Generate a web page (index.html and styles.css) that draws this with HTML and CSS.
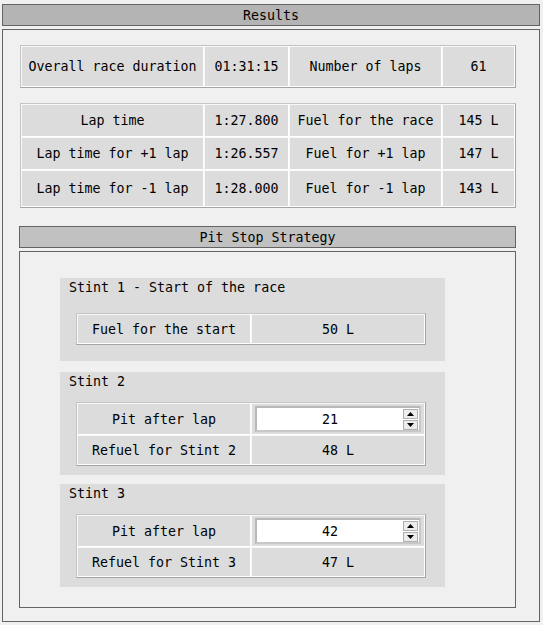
FILE: index.html
```html
<!DOCTYPE html>
<html>
<head>
<meta charset="utf-8">
<link rel="stylesheet" href="styles.css">
</head>
<body>
<div class="app">
  <div class="bar">Results</div>
  <div class="results">
    <div class="grid g1">
      <div class="cell">Overall race duration</div>
      <div class="cell">01:31:15</div>
      <div class="cell">Number of laps</div>
      <div class="cell">61</div>
    </div>
    <div class="grid g2">
      <div class="cell">Lap time</div>
      <div class="cell">1:27.800</div>
      <div class="cell">Fuel for the race</div>
      <div class="cell">145 L</div>
      <div class="cell">Lap time for +1 lap</div>
      <div class="cell">1:26.557</div>
      <div class="cell">Fuel for +1 lap</div>
      <div class="cell">147 L</div>
      <div class="cell">Lap time for -1 lap</div>
      <div class="cell">1:28.000</div>
      <div class="cell">Fuel for -1 lap</div>
      <div class="cell">143 L</div>
    </div>
    <div class="bar bar2">Pit Stop Strategy</div>
    <div class="pit">
      <div class="stint s1">
        <div class="stitle">Stint 1 - Start of the race</div>
        <div class="grid sg sg1">
          <div class="cell">Fuel for the start</div>
          <div class="cell">50 L</div>
        </div>
      </div>
      <div class="stint s2">
        <div class="stitle">Stint 2</div>
        <div class="grid sg sg2">
          <div class="cell">Pit after lap</div>
          <div class="cell">
            <div class="spin">
              <span class="val">21</span>
              <span class="arrows">
                <span class="arr"><svg width="7" height="4" viewBox="0 0 7 4"><path d="M0 4L3.5 0L7 4Z" fill="#000"/></svg></span>
                <span class="arr"><svg width="7" height="4" viewBox="0 0 7 4"><path d="M0 0L3.5 4L7 0Z" fill="#000"/></svg></span>
              </span>
            </div>
          </div>
          <div class="cell">Refuel for Stint 2</div>
          <div class="cell">48 L</div>
        </div>
      </div>
      <div class="stint s3">
        <div class="stitle">Stint 3</div>
        <div class="grid sg sg2">
          <div class="cell">Pit after lap</div>
          <div class="cell">
            <div class="spin">
              <span class="val">42</span>
              <span class="arrows">
                <span class="arr"><svg width="7" height="4" viewBox="0 0 7 4"><path d="M0 4L3.5 0L7 4Z" fill="#000"/></svg></span>
                <span class="arr"><svg width="7" height="4" viewBox="0 0 7 4"><path d="M0 0L3.5 4L7 0Z" fill="#000"/></svg></span>
              </span>
            </div>
          </div>
          <div class="cell">Refuel for Stint 3</div>
          <div class="cell">47 L</div>
        </div>
      </div>
    </div>
  </div>
</div>
</body>
</html>
```

FILE: styles.css
```css
* { box-sizing: border-box; }
html, body { margin: 0; padding: 0; }
body {
  background: #f0f0f0;
  font-family: "DejaVu Sans Mono", "Liberation Mono", monospace;
  font-size: 13.3px;
  color: #000;
}
.app {
  padding: 4px 0 0 2px;
  width: 540px;
}
.bar {
  height: 22px;
  border: 1px solid #646464;
  background: #b4b4b4;
  text-align: center;
  padding-top: 1px;
  line-height: 19px;
}
.results {
  margin-top: 3px;
  height: 593px;
  border: 1px solid #646464;
  padding: 15px 0 0 16px;
}
.grid {
  display: grid;
  margin-left: 1px;
  border: 1px solid;
  border-color: #c4c4c4 #a4a4a4 #a4a4a4 #c4c4c4;
  background: #dcdcdc;
}
.cell {
  display: flex;
  align-items: center;
  justify-content: center;
  border: 1px solid;
  border-color: #f8f8f8 #ffffff #ffffff #f8f8f8;
  white-space: nowrap;
  background: #dcdcdc;
}
.g1 {
  width: 496px;
  grid-template-columns: 183px 85px 153px 73px;
  grid-template-rows: 41px;
}
.g2 {
  width: 496px;
  margin-top: 15px;
  grid-template-columns: 183px 85px 153px 73px;
  grid-template-rows: 33px 33px 37px;
}
.bar2 {
  margin-top: 18px;
  width: 497px;
  background: #c1c1c1;
}
.pit {
  margin-top: 3px;
  width: 497px;
  height: 357px;
  border: 1px solid #646464;
  padding: 26px 0 0 40px;
  display: flex;
  flex-direction: column;
}
.stint {
  width: 385px;
  background: #dcdcdc;
}
.s1 { height: 83px; }
.s2 { margin-top: 11px; height: 103px; }
.s3 { margin-top: 9px; height: 103px; }
.stitle {
  height: 18px;
  padding-top: 2px;
  line-height: 16px;
  padding-left: 9px;
}
.sg {
  width: 350px;
  margin-left: 16px;
  grid-template-columns: 174px 174px;
}
.sg1 { margin-top: 17px; grid-template-rows: 30px; }
.sg2 { margin-top: 12px; grid-template-rows: 32px 30px; }
.sg2 .cell:nth-child(2) { padding: 2px 3px 0 3px; align-items: flex-start; }
.spin {
  width: 166px;
  height: 26px;
  background: #fff;
  border: 2px solid;
  border-color: #b8b8b8 #c8c8c8 #c8c8c8 #b8b8b8;
  display: flex;
  align-items: center;
}
.val {
  flex: 1;
  text-align: center;
}
.arrows {
  display: flex;
  flex-direction: column;
  gap: 1px;
  margin-right: 1px;
  width: 15px;
}
.arr {
  height: 10px;
  display: flex;
  align-items: center;
  justify-content: center;
  background: #ececec;
  border: 1px solid #b0b0b0;
}
.arr svg { display: block; }
```
